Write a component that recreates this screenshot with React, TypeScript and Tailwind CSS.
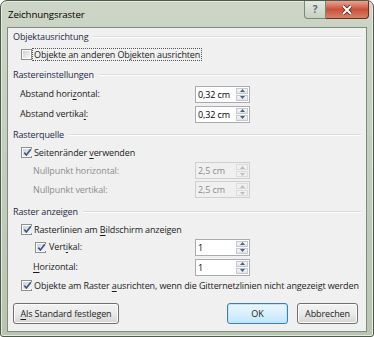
import React from "react";

const font = "font-['Open_Sans',sans-serif] text-[9px] tracking-[-0.12px] whitespace-nowrap";

function Box({ checked }: { checked?: boolean }) {
  return (
    <span className="w-[11px] h-[11px] shrink-0 border border-[#8e8f8f] bg-white p-px flex">
      <span className="flex-1 flex items-center justify-center bg-gradient-to-br from-[#cfd3d8] to-[#f7f7f7]">
        {checked && (
          <svg width="9" height="9" viewBox="0 0 9 9">
            <path d="M1.3 4.6 L3.4 7 L7.8 1.2" stroke="#3f5388" strokeWidth="1.6" fill="none" />
          </svg>
        )}
      </span>
    </span>
  );
}

function Key({ children }: { children: React.ReactNode }) {
  return <span className="underline underline-offset-2">{children}</span>;
}

function Header({ title, className = "" }: { title: string; className?: string }) {
  return (
    <div className={`h-[18px] flex items-center gap-[5px] ${className}`}>
      <span className="text-[#1e2a44]">{title}</span>
      <span className="flex-1 border-t border-[#dcdcdc] border-b-white border-b" />
    </div>
  );
}

function CheckRow({ checked, children, focus, h = "h-[16px]" }: {
  checked?: boolean; children: React.ReactNode; focus?: boolean; h?: string;
}) {
  return (
    <div className={`${h} pl-[8px] flex items-center`}>
      <Box checked={checked} />
      <span className={`ml-[1px] px-[1px] leading-[11px] ${focus ? "outline outline-1 outline-dotted outline-[#555]" : ""}`}>
        {children}
      </span>
    </div>
  );
}

function Arrow({ up, dim }: { up?: boolean; dim?: boolean }) {
  return (
    <svg width="5" height="3" viewBox="0 0 5 3">
      <path d={up ? "M0 3 L2.5 0 L5 3 Z" : "M0 0 L2.5 3 L5 0 Z"} fill={dim ? "#b8bcc4" : "#4d6185"} />
    </svg>
  );
}

function Spin({ value, disabled }: { value: string; disabled?: boolean }) {
  const half = `flex-1 flex items-center justify-center border ${
    disabled ? "border-[#dcdcdc]" : "border-[#c4c8d0] bg-gradient-to-b from-[#f6f6f6] to-[#e2e4e8]"
  }`;
  return (
    <div
      className={`w-[55px] h-[17px] flex border ${
        disabled ? "border-[#cfcfcf] bg-[#f0f0f0] text-[#8b8b8b]" : "border-[#a9abb1] bg-white text-black"
      }`}
    >
      <span className="flex-1 pl-[2px] leading-[15px]">{value}</span>
      <div className="w-[13px] flex flex-col gap-px p-px pl-0">
        <div className={half}>
          <Arrow up dim={disabled} />
        </div>
        <div className={half}>
          <Arrow dim={disabled} />
        </div>
      </div>
    </div>
  );
}

function FieldRow({ label, value, disabled, indent, h = "h-[20px]" }: {
  label: React.ReactNode; value: string; disabled?: boolean; indent: string; h?: string;
}) {
  return (
    <div className={`${h} flex items-center`}>
      <span className={`${indent} w-[182px] ${disabled ? "text-[#8d8d8d]" : ""}`}>{label}</span>
      <Spin value={value} disabled={disabled} />
    </div>
  );
}

function Button({ children, primary, className = "" }: { children: React.ReactNode; primary?: boolean; className?: string }) {
  return (
    <div
      className={`h-[21px] rounded-[3px] border flex items-center justify-center bg-gradient-to-b ${
        primary
          ? "border-[#3c7fb1] from-[#eaf6fd] via-[#d9f0fc] to-[#bee6fd] shadow-[inset_0_0_0_1px_#c4e5f6]"
          : "border-[#707070] from-[#f2f2f2] via-[#ebebeb] to-[#d5d5d5] shadow-[inset_0_0_0_1px_#fcfcfc]"
      } ${className}`}
    >
      {children}
    </div>
  );
}

export default function App() {
  return (
    <div className={`${font} w-[374px] h-[337px] bg-white text-[#1b1b1b]`}>
      <div className="w-[374px] h-[337px] rounded-t-[7px] rounded-b-[3px] border border-[#4e5a4c] bg-gradient-to-b from-[#cdd6c6] via-[#c3cdbd] to-[#b9c4b3] flex flex-col shadow-[inset_0_0_0_1px_#e4eadf]">
        {/* title bar */}
        <div className="h-[26px] flex items-start">
          <span className="pl-[7px] pt-[7px] text-[9.7px] text-black">Zeichnungsraster</span>
          <div className="ml-auto mr-[4px] flex">
            <div className="w-[22px] h-[18px] rounded-bl-[4px] border border-t-0 border-[#7a8676] bg-gradient-to-b from-[#e4e9e0] to-[#c7d0c2] flex items-center justify-center text-[10px] font-bold text-[#5b6a78]">
              ?
            </div>
            <div className="w-[43px] h-[18px] rounded-br-[4px] border border-t-0 border-l-0 border-[#6b2e26] bg-gradient-to-b from-[#e8a493] via-[#c9503b] to-[#d7826a] flex items-center justify-center">
              <svg width="12" height="10" viewBox="0 0 12 10">
                <path d="M2 1 L10 9 M10 1 L2 9" stroke="#5a231a" strokeWidth="3.6" />
                <path d="M2 1 L10 9 M10 1 L2 9" stroke="#ffffff" strokeWidth="2" />
              </svg>
            </div>
          </div>
        </div>

        {/* client area */}
        <div className="mx-[6px] border border-[#7f8b7b] bg-[#f0f0f0] flex flex-col pl-[5px] pr-[5px] pb-[7px]">
          <Header title="Objektausrichtung" />
          <CheckRow focus>
            Ob<Key>j</Key>ekte an anderen Objekten ausrichten
          </CheckRow>

          <Header title="Rastereinstellungen" className="mt-[4px]" />
          <FieldRow indent="pl-[7px]" value="0,32 cm" label={<>Abstand hori<Key>z</Key>ontal:</>} />
          <FieldRow indent="pl-[7px]" value="0,32 cm" label={<>Abstand vertika<Key>l</Key>:</>} />

          <Header title="Rasterquelle" className="mt-[2px]" />
          <CheckRow checked h="h-[17px]">
            Seitenränder <Key>v</Key>erwenden
          </CheckRow>
          <FieldRow indent="pl-[20px]" h="h-[19px]" value="2,5 cm" disabled label="Nullpunkt horizontal:" />
          <FieldRow indent="pl-[20px]" h="h-[19px]" value="2,5 cm" disabled label="Nullpunkt vertikal:" />

          <Header title="Raster anzeigen" className="mt-[4px]" />
          <CheckRow checked>
            Rasterlinien am <Key>B</Key>ildschirm anzeigen
          </CheckRow>
          <div className="h-[20px] flex items-center">
            <div className="w-[182px] pl-[22px] flex items-center">
              <Box checked />
              <span className="ml-[3px]">
                Vert<Key>i</Key>kal:
              </span>
            </div>
            <Spin value="1" />
          </div>
          <FieldRow indent="pl-[20px]" value="1" label={<><Key>H</Key>orizontal:</>} />
          <CheckRow checked>
            Objekte am Raster <Key>a</Key>usrichten, wenn die Gitternetzlinien nicht angezeigt werden
          </CheckRow>

          <div className="mt-[10px] flex items-center">
            <Button className="w-[106px]">
              <span>
                <Key>A</Key>ls Standard festlegen
              </span>
            </Button>
            <Button primary className="ml-auto w-[61px]">
              OK
            </Button>
            <Button className="ml-[9px] mr-[3px] w-[61px]">Abbrechen</Button>
          </div>
        </div>
      </div>
    </div>
  );
}
